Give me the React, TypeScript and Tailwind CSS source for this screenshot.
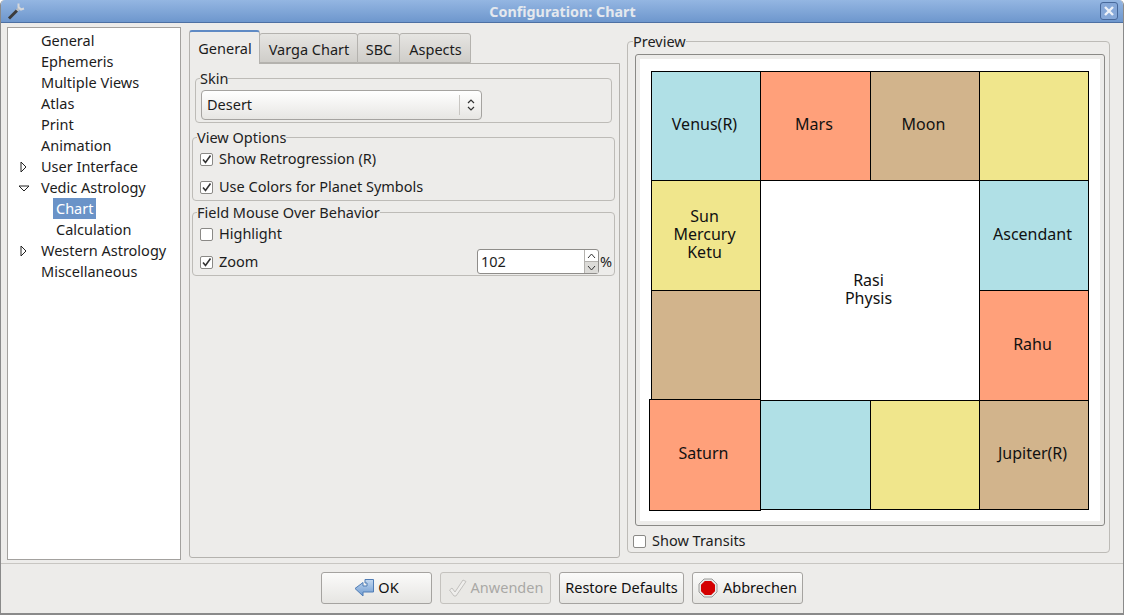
const font = "font-['Noto_Sans',sans-serif]";

const treeItems = [
  { label: "General", level: 0 },
  { label: "Ephemeris", level: 0 },
  { label: "Multiple Views", level: 0 },
  { label: "Atlas", level: 0 },
  { label: "Print", level: 0 },
  { label: "Animation", level: 0 },
  { label: "User Interface", level: 0, arrow: "right" },
  { label: "Vedic Astrology", level: 0, arrow: "down" },
  { label: "Chart", level: 1, selected: true },
  { label: "Calculation", level: 1 },
  { label: "Western Astrology", level: 0, arrow: "right" },
  { label: "Miscellaneous", level: 0 },
];

const BLUE = "bg-[#b0e0e6]";
const ORANGE = "bg-[#ffa07a]";
const TAN = "bg-[#d2b48c]";
const YELLOW = "bg-[#f0e68c]";

function Cell({ color, lines = [], className = "-mb-px" }: { color: string; lines?: string[]; className?: string }) {
  return (
    <div className={`${color} border border-black -mr-px pr-[3px] pb-[4px] flex flex-col items-center justify-center text-[16px] leading-[18px] text-[#111] ${className}`}>
      {lines.map((l) => (
        <span key={l}>{l}</span>
      ))}
    </div>
  );
}

function Check({ checked }: { checked?: boolean }) {
  return (
    <span className="w-[13px] h-[13px] rounded-[2px] border border-[#8a8986] bg-white shrink-0 flex items-center justify-center">
      {checked && (
        <svg width="11" height="11" viewBox="0 0 11 11" fill="none">
          <path d="M2 5.5 L4.5 8.5 L9.5 1.5" stroke="#333" strokeWidth="1.6" />
        </svg>
      )}
    </span>
  );
}

function Group({ title, className = "", legendClass = "ml-[4px]", children }: { title: string; className?: string; legendClass?: string; children?: React.ReactNode }) {
  return (
    <fieldset className={`border border-[#bdbbb7] rounded-[4px] ${className}`}>
      <legend className={`${legendClass} leading-[14px] text-[14.5px] text-[#222]`}>{title}</legend>
      {children}
    </fieldset>
  );
}

function Button({ width, disabled, children }: { width: string; disabled?: boolean; children: React.ReactNode }) {
  return (
    <div
      className={`${width} h-[32px] rounded-[3px] border flex items-center justify-center text-[14.5px] ${
        disabled
          ? "border-[#c4c2be] bg-[#e9e8e5] text-[#a9a8a5]"
          : "border-[#a5a3a0] bg-gradient-to-b from-[#fbfbfa] to-[#e6e5e2] text-[#111]"
      }`}
    >
      {children}
    </div>
  );
}

function Tab({ label, active, width }: { label: string; active?: boolean; width: string }) {
  return active ? (
    <div className={`${width} h-[34px] pt-[2px] pl-[1px] relative z-10 -mb-px rounded-t-[3px] border border-b-0 border-[#b4b2ae] border-t-[#5f8ac4] border-t-2 bg-[#edecea] flex items-center justify-center text-[14.5px]`}>
      {label}
    </div>
  ) : (
    <div className={`${width} h-[30px] pt-[3px] pl-[1px] rounded-t-[3px] border border-[#b4b2ae] bg-gradient-to-b from-[#e6e5e2] to-[#cfcdc9] flex items-center justify-center text-[14.5px] -ml-px`}>
      {label}
    </div>
  );
}

export default function App() {
  return (
    <div className={`${font} w-[1124px] h-[615px] overflow-hidden bg-[#edecea] text-[#1c1c1c] flex flex-col rounded-t-[5px] border-x border-b-2 border-[#8a8a8a]`}>
      {/* title bar */}
      <div className="h-[23px] shrink-0 bg-gradient-to-b from-[#94b6e2] to-[#6e97cd] border-b border-[#4d70a3] flex items-center justify-between pl-[6px] pr-[5px]">
        <svg width="18" height="18" viewBox="0 0 18 18" fill="none">
          <path d="M2 16.5 L10 8.5" stroke="#3c3c3c" strokeWidth="3" />
          <path d="M10 8.5 L12.5 6" stroke="#b9bcc0" strokeWidth="3" />
          <path d="M11.5 1.5 L11.5 5 L14 7.5 L17 6.5" stroke="#d5d7da" strokeWidth="2" />
        </svg>
        <span className="text-[14.3px] font-bold text-[#e4e8ee] pt-[1px]">Configuration: Chart</span>
        <span className="w-[18px] h-[18px] rounded-[3px] border border-[#47689a] bg-[#86a8d8] flex items-center justify-center">
          <svg width="12" height="12" viewBox="0 0 12 12">
            <path d="M2 2 L10 10 M10 2 L2 10" stroke="#eef2f8" strokeWidth="2.4" />
          </svg>
        </span>
      </div>

      {/* main */}
      <div className="flex-1 flex min-h-0 pt-[3px] pl-[6px] pr-[13px]">
        {/* tree */}
        <div className="w-[174px] h-[533px] mt-[1px] bg-white border border-[#a3a19e] pt-[2px] shrink-0">
          {treeItems.map((t) => (
            <div key={t.label} className={`h-[21px] flex items-center relative text-[14.5px] ${t.level ? "pl-[45px]" : "pl-[30px]"}`}>
              {t.arrow && (
                <svg className="absolute left-[10px] top-[5px]" width="12" height="12" viewBox="0 0 12 12" fill="none">
                  {t.arrow === "right" ? <path d="M3 1 L8 6 L3 11 Z" stroke="#222" /> : <path d="M1 4 L11 4 L6 9 Z" stroke="#222" />}
                </svg>
              )}
              <span className={t.selected ? "bg-[#6a93c8] text-white px-[3px] h-[21px] leading-[21px]" : "px-[3px]"}>{t.label}</span>
            </div>
          ))}
        </div>

        {/* tabs */}
        <div className="w-[431px] ml-[8px] shrink-0 flex flex-col">
          <div className="h-[37px] flex items-end">
            <Tab label="General" active width="w-[71px]" />
            <Tab label="Varga Chart" width="w-[99px]" />
            <Tab label="SBC" width="w-[43px]" />
            <Tab label="Aspects" width="w-[72px]" />
          </div>
          <div className="h-[495px] border border-[#b4b2ae] rounded-b-[3px] pl-[2px] pr-[4px] pt-[7px]">
            <Group title="Skin" className="mx-[3px] h-[52px]">
              <div className="h-[30px] mt-[5px] ml-[5px] w-[281px] rounded-[4px] border border-[#a5a3a0] bg-gradient-to-b from-white to-[#e7e6e3] flex items-center justify-between pl-[5px] text-[14.5px]">
                <span>Desert</span>
                <span className="h-[20px] w-[22px] border-l border-[#c8c6c2] flex items-center justify-center">
                  <svg width="10" height="16" viewBox="0 0 10 16" fill="none">
                    <path d="M2 6 L5 3 L8 6 M2 10 L5 13 L8 10" stroke="#333" strokeWidth="1.2" />
                  </svg>
                </span>
              </div>
            </Group>
            <Group title="View Options" className="mt-[7px] h-[71px] text-[14.5px]">
              <div className="px-[7px]">
                <div className="flex items-center gap-[6px] h-[22px] mt-[4px]"><Check checked /><span>Show Retrogression (R)</span></div>
                <div className="flex items-center gap-[6px] h-[22px] mt-[6px]"><Check checked /><span>Use Colors for Planet Symbols</span></div>
              </div>
            </Group>
            <Group title="Field Mouse Over Behavior" className="mt-[4px] h-[71px] text-[14.5px]">
              <div className="px-[7px]">
                <div className="flex items-center gap-[6px] h-[22px] mt-[4px]"><Check /><span>Highlight</span></div>
                <div className="flex items-center gap-[6px] h-[24px] mt-[5px]">
                  <Check checked />
                  <span>Zoom</span>
                  <div className="ml-auto flex items-center -mr-[5px] -mt-[1px]">
                    <div className="w-[122px] h-[25px] rounded-[3px] border border-[#8f8d8a] bg-white flex items-stretch">
                      <span className="flex-1 pl-[3px] leading-[23px]">102</span>
                      <span className="w-[14px] border-l border-[#b4b2ae] flex flex-col">
                        <span className="flex-1 flex items-center justify-center">
                          <svg width="9" height="6" viewBox="0 0 9 6" fill="none"><path d="M1 5 L4.5 1 L8 5" stroke="#333" /></svg>
                        </span>
                        <span className="flex-1 flex items-center justify-center bg-[#dcdbd8] border-t border-[#b4b2ae]">
                          <svg width="9" height="6" viewBox="0 0 9 6" fill="none"><path d="M1 1 L4.5 5 L8 1" stroke="#333" /></svg>
                        </span>
                      </span>
                    </div>
                    <span className="ml-[1px]">%</span>
                  </div>
                </div>
              </div>
            </Group>
          </div>
        </div>

        {/* preview */}
        <div className="flex-1 ml-[7px] flex flex-col">
          <Group title="Preview" legendClass="ml-[5px]" className="h-[519px] mt-[8px]">
            <div className="pl-[7px] pr-[4px] pt-[6px]">
              <div className="h-[472px] rounded-[3px] border border-[#8a8986] p-[4px] bg-[#edecea]">
                <div className="h-full bg-white pl-[11px] pt-[12px]">
                  <div className="grid grid-cols-[109px_110px_109px_109px] grid-rows-[109px_110px_110px_109px] w-[437px]">
                    <Cell color={BLUE} lines={["Venus(R)"]} />
                    <Cell color={ORANGE} lines={["Mars"]} />
                    <Cell color={TAN} lines={["Moon"]} />
                    <Cell color={YELLOW} />
                    <Cell color={YELLOW} lines={["Sun", "Mercury", "Ketu"]} />
                    <Cell color="bg-white" lines={["Rasi", "Physis"]} className="-mb-px col-span-2 row-span-2" />
                    <Cell color={BLUE} lines={["Ascendant"]} />
                    <Cell color={TAN} />
                    <Cell color={ORANGE} lines={["Rahu"]} />
                    <Cell color={ORANGE} lines={["Saturn"]} className="-ml-[2px] -mt-[1px] -mb-[2px] z-10" />
                    <Cell color={BLUE} />
                    <Cell color={YELLOW} />
                    <Cell color={TAN} lines={["Jupiter(R)"]} />
                  </div>
                </div>
              </div>
              <div className="flex items-center gap-[6px] h-[20px] mt-[5px] -ml-[2px] text-[14.5px]">
                <Check />
                <span>Show Transits</span>
              </div>
            </div>
          </Group>
        </div>
      </div>

      {/* button bar */}
      <div className="h-[50px] shrink-0 border-t border-[#c8c6c2] flex justify-center gap-[8px] pt-[8px]">
        <Button width="w-[111px]">
          <svg width="21" height="20" viewBox="0 0 21 20" className="mr-[3px]">
            <defs>
              <linearGradient id="okArrow" x1="0" y1="0" x2="0" y2="1">
                <stop offset="0" stopColor="#c3d8f0" />
                <stop offset="1" stopColor="#6f9bd0" />
              </linearGradient>
            </defs>
            <path d="M11 1.5 L19.5 1.5 L19.5 14 L9 14 L9 18 L1 10.5 L9 4.5 L9 8 L13 8 L13 5 L11 5 Z" fill="url(#okArrow)" stroke="#4f7cb5" strokeLinejoin="round" />
          </svg>
          <span>OK</span>
        </Button>
        <Button width="w-[111px]" disabled>
          <svg width="20" height="20" viewBox="0 0 20 20" fill="none" className="mr-[3px]">
            <path d="M1.5 12 L4 10 L7 14 L15 2 L18 3.5 L8 18 L6 18 Z" fill="#efeeec" stroke="#c2c1be" strokeLinejoin="round" />
          </svg>
          <span>Anwenden</span>
        </Button>
        <Button width="w-[125px]">
          <span>Restore Defaults</span>
        </Button>
        <Button width="w-[111px]">
          <svg width="20" height="20" viewBox="0 0 20 20" className="mr-[5px]">
            <polygon points="6,1 14,1 19,6 19,14 14,19 6,19 1,14 1,6" fill="#e8e8e6" stroke="#9a9a98" />
            <polygon points="6.8,3 13.2,3 17,6.8 17,13.2 13.2,17 6.8,17 3,13.2 3,6.8" fill="#d40000" />
          </svg>
          <span>Abbrechen</span>
        </Button>
      </div>
    </div>
  );
}
